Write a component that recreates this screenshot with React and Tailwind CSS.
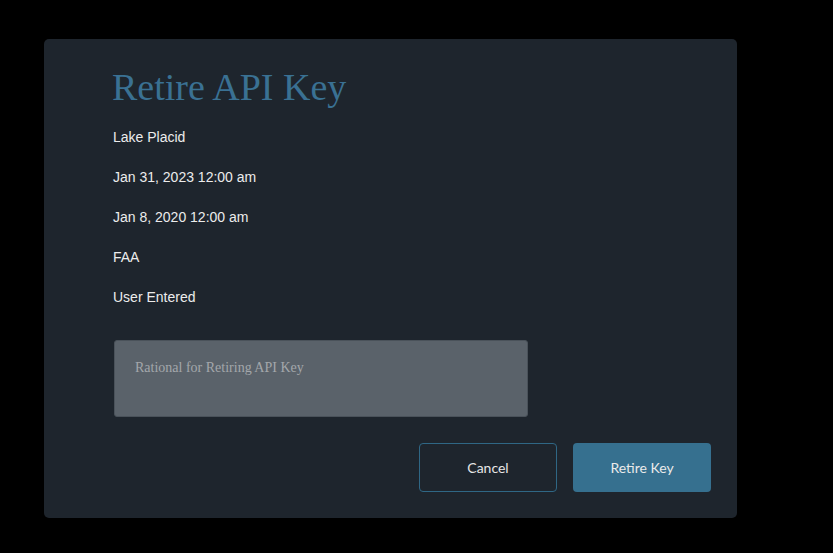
export default function App() {
  const rows = ["Lake Placid", "Jan 31, 2023 12:00 am", "Jan 8, 2020 12:00 am", "FAA", "User Entered"];
  return (
    <div className="w-[833px] h-[553px] bg-black pl-[44px] pt-[39px]">
      <div className="w-[693px] h-[479px] bg-[#1e252d] rounded-[5px] pl-[68px] pr-[26px] pt-[24px] flex flex-col">
        <h1 className="text-[38px] leading-[48px] text-[#3a7193] font-['Liberation_Serif',serif]">Retire API Key</h1>
        <div className="mt-[6px] flex flex-col font-['Liberation_Sans',Arial,sans-serif] text-[14px] text-[#ececec]">
          {rows.map((r) => (
            <div key={r} className="h-[40px] leading-[40px] pl-[1px]">{r}</div>
          ))}
        </div>
        <textarea
          autoFocus
          className="mt-[23px] ml-[2px] w-[414px] h-[77px] resize-none bg-[#5a626a] border border-[#4a525a] rounded-[3px] pl-[20px] pt-[16px] text-[14px] font-['Liberation_Serif',serif] text-[#e0e0e0] placeholder:text-[#a3a7ab] caret-[#c8ccd0] outline-none"
          placeholder="Rational for Retiring API Key"
        />
        <div className="mt-[26px] flex justify-end gap-[16px] font-['Lato',sans-serif] text-[14px]">
          <button className="w-[138px] h-[49px] rounded-[4px] border border-[#2f6785] text-[#e6e6e6] bg-transparent">Cancel</button>
          <button className="w-[138px] h-[49px] rounded-[4px] bg-[#36708f] text-[#eaeaea]">Retire Key</button>
        </div>
      </div>
    </div>
  );
}
